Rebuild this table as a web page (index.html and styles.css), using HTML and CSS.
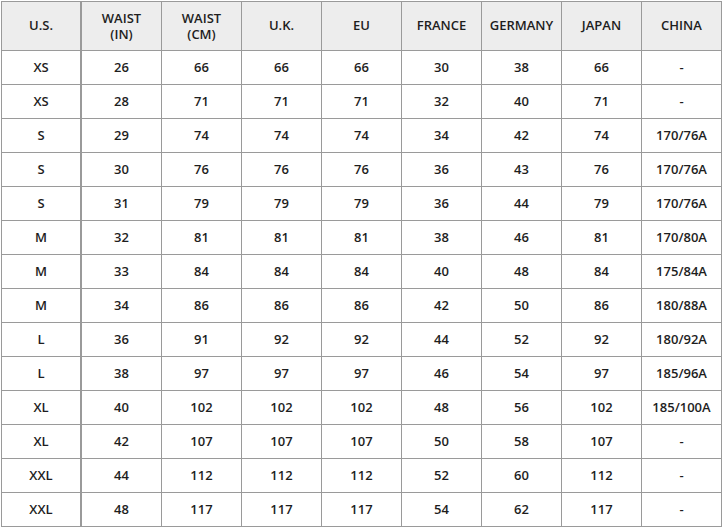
FILE: index.html
```html
<!DOCTYPE html>
<html>
<head>
<meta charset="utf-8">
<link rel="stylesheet" href="styles.css">
</head>
<body>
<div class="chart">
  <div class="cell head first">U.S.</div>
  <div class="cell head"><span class="ln">WAIST</span><span class="ln">(IN)</span></div>
  <div class="cell head"><span class="ln">WAIST</span><span class="ln">(CM)</span></div>
  <div class="cell head">U.K.</div>
  <div class="cell head">EU</div>
  <div class="cell head">FRANCE</div>
  <div class="cell head">GERMANY</div>
  <div class="cell head">JAPAN</div>
  <div class="cell head">CHINA</div>

  <div class="cell first">XS</div><div class="cell">26</div><div class="cell">66</div><div class="cell">66</div><div class="cell">66</div><div class="cell">30</div><div class="cell">38</div><div class="cell">66</div><div class="cell">-</div>
  <div class="cell first">XS</div><div class="cell">28</div><div class="cell">71</div><div class="cell">71</div><div class="cell">71</div><div class="cell">32</div><div class="cell">40</div><div class="cell">71</div><div class="cell">-</div>
  <div class="cell first">S</div><div class="cell">29</div><div class="cell">74</div><div class="cell">74</div><div class="cell">74</div><div class="cell">34</div><div class="cell">42</div><div class="cell">74</div><div class="cell">170/76A</div>
  <div class="cell first">S</div><div class="cell">30</div><div class="cell">76</div><div class="cell">76</div><div class="cell">76</div><div class="cell">36</div><div class="cell">43</div><div class="cell">76</div><div class="cell">170/76A</div>
  <div class="cell first">S</div><div class="cell">31</div><div class="cell">79</div><div class="cell">79</div><div class="cell">79</div><div class="cell">36</div><div class="cell">44</div><div class="cell">79</div><div class="cell">170/76A</div>
  <div class="cell first">M</div><div class="cell">32</div><div class="cell">81</div><div class="cell">81</div><div class="cell">81</div><div class="cell">38</div><div class="cell">46</div><div class="cell">81</div><div class="cell">170/80A</div>
  <div class="cell first">M</div><div class="cell">33</div><div class="cell">84</div><div class="cell">84</div><div class="cell">84</div><div class="cell">40</div><div class="cell">48</div><div class="cell">84</div><div class="cell">175/84A</div>
  <div class="cell first">M</div><div class="cell">34</div><div class="cell">86</div><div class="cell">86</div><div class="cell">86</div><div class="cell">42</div><div class="cell">50</div><div class="cell">86</div><div class="cell">180/88A</div>
  <div class="cell first">L</div><div class="cell">36</div><div class="cell">91</div><div class="cell">92</div><div class="cell">92</div><div class="cell">44</div><div class="cell">52</div><div class="cell">92</div><div class="cell">180/92A</div>
  <div class="cell first">L</div><div class="cell">38</div><div class="cell">97</div><div class="cell">97</div><div class="cell">97</div><div class="cell">46</div><div class="cell">54</div><div class="cell">97</div><div class="cell">185/96A</div>
  <div class="cell first">XL</div><div class="cell">40</div><div class="cell">102</div><div class="cell">102</div><div class="cell">102</div><div class="cell">48</div><div class="cell">56</div><div class="cell">102</div><div class="cell">185/100A</div>
  <div class="cell first">XL</div><div class="cell">42</div><div class="cell">107</div><div class="cell">107</div><div class="cell">107</div><div class="cell">50</div><div class="cell">58</div><div class="cell">107</div><div class="cell">-</div>
  <div class="cell first">XXL</div><div class="cell">44</div><div class="cell">112</div><div class="cell">112</div><div class="cell">112</div><div class="cell">52</div><div class="cell">60</div><div class="cell">112</div><div class="cell">-</div>
  <div class="cell first">XXL</div><div class="cell">48</div><div class="cell">117</div><div class="cell">117</div><div class="cell">117</div><div class="cell">54</div><div class="cell">62</div><div class="cell">117</div><div class="cell">-</div>
</div>
</body>
</html>
```
FILE: styles.css
```css
html, body {
  margin: 0;
  padding: 0;
  background: #ffffff;
}
body {
  padding: 1px 0 0 1px;
}
.chart {
  display: grid;
  grid-template-columns: 79px repeat(8, 79px);
  grid-template-rows: 48px repeat(14, 33px);
  gap: 1px;
  padding: 1px;
  width: 721px;
  box-sizing: border-box;
  background: #9a9a9a;
  font-family: "Open Sans", "DejaVu Sans", sans-serif;
  font-size: 13px;
  font-weight: 600;
  color: #1e1e1e;
}
.cell {
  background: #ffffff;
  display: flex;
  flex-direction: column;
  align-items: center;
  justify-content: center;
  text-align: center;
  line-height: 15px;
  box-sizing: border-box;
}
.cell.first {
  border-right: 1px solid #9a9a9a;
}
.cell.head {
  background: #ededed;
  padding-bottom: 1px;
}
.ln {
  display: block;
  line-height: 16px;
}
```
